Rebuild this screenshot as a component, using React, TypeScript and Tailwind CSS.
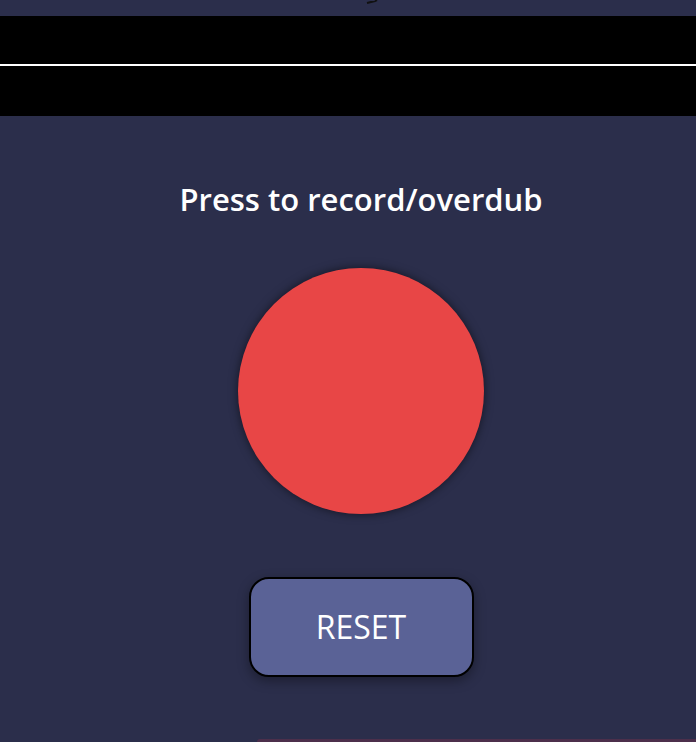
import React from "react";

export default function App() {
  return (
    <div
      className="relative h-[742px] w-[696px] overflow-hidden bg-[#2b2e4b] text-white"
      style={{ fontFamily: '"Open Sans", "Noto Sans", sans-serif' }}
    >
      {/* top strip */}
      <div className="relative h-[16px]">
        <svg
          className="absolute left-[366px] top-0"
          width="12"
          height="4"
          viewBox="0 0 12 4"
        >
          <path d="M1 3 L9 1 L11 0" stroke="#111" strokeWidth="2" fill="none" />
        </svg>
      </div>

      {/* waveform area */}
      <div className="flex h-[100px] flex-col bg-black">
        <div className="h-[48px]" />
        <div className="h-[2px] bg-white" />
      </div>

      {/* controls */}
      <div className="flex flex-col items-center pl-[26px]">
        <p className="mt-[61px] text-[31px] leading-[44px] font-semibold">
          Press to record/overdub
        </p>

        <button className="mt-[47px] h-[246px] w-[246px] rounded-full bg-[#e84646] shadow-[0_0_10px_rgba(0,0,0,0.55)]" />

        <button className="mt-[63px] flex h-[100px] w-[225px] items-center justify-center rounded-[20px] border-2 border-black bg-[#5a6296] text-[32px] text-white shadow-[0_4px_12px_rgba(0,0,0,0.35)]">
          RESET
        </button>
      </div>

      {/* bottom hint */}
      <div className="absolute bottom-0 left-[257px] right-0 h-[3px] rounded-tl-[3px] bg-[#4c2f4b]" />
    </div>
  );
}
